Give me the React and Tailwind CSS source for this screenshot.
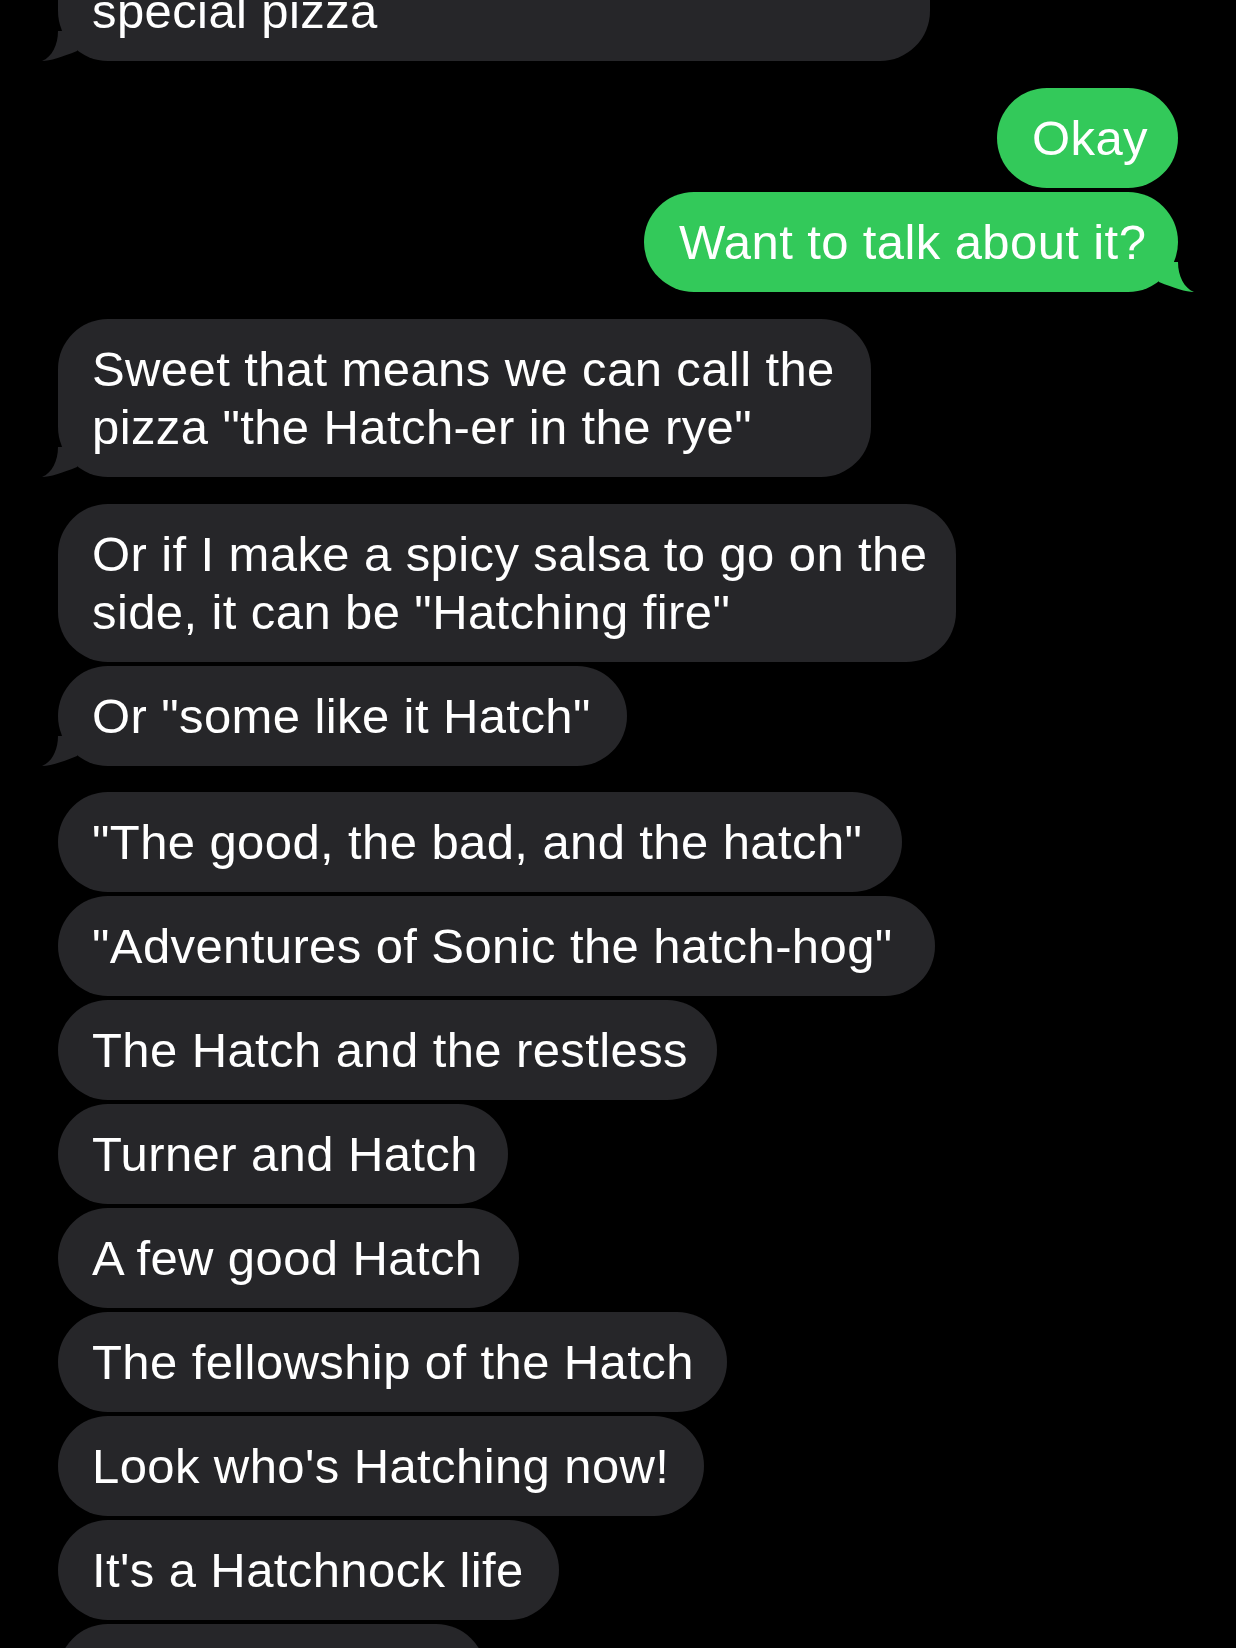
const GRAY = "#262629";
const GREEN = "#33c95a";

const messages = [
  { side: "in", w: 872, lines: ["special pizza"], tail: true, top: true },
  { side: "out", w: 181, lines: ["Okay"], mt: 27 },
  { side: "out", w: 534, lines: ["Want to talk about it?"], mt: 4, tail: true },
  { side: "in", w: 813, lines: ["Sweet that means we can call the", 'pizza "the Hatch-er in the rye"'], mt: 27, tail: true },
  { side: "in", w: 898, lines: ["Or if I make a spicy salsa to go on the", 'side, it can be "Hatching fire"'], mt: 27 },
  { side: "in", w: 569, lines: ['Or "some like it Hatch"'], mt: 4, tail: true },
  { side: "in", w: 844, lines: ['"The good, the bad, and the hatch"'], mt: 26 },
  { side: "in", w: 877, lines: ['"Adventures of Sonic the hatch-hog"'], mt: 4 },
  { side: "in", w: 659, lines: ["The Hatch and the restless"], mt: 4 },
  { side: "in", w: 450, lines: ["Turner and Hatch"], mt: 4 },
  { side: "in", w: 461, lines: ["A few good Hatch"], mt: 4 },
  { side: "in", w: 669, lines: ["The fellowship of the Hatch"], mt: 4 },
  { side: "in", w: 646, lines: ["Look who's Hatching now!"], mt: 4 },
  { side: "in", w: 501, lines: ["It's a Hatchnock life"], mt: 4 },
  { side: "in", w: 428, lines: ["\u00a0"], mt: 4 },
];

// little curled tail under the last bubble of a group
function Tail({ color, right }) {
  return (
    <svg
      viewBox="0 0 40 30"
      className={
        "absolute bottom-0 w-[40px] h-[30px] " +
        (right ? "right-[-16px] -scale-x-100" : "left-[-16px]")
      }
    >
      <path d="M16 0 C16 14 10 26 0 30 C8 30 20 26 35 20 L35 0 Z" fill={color} />
    </svg>
  );
}

function Bubble({ m }) {
  const out = m.side === "out";
  const color = out ? GREEN : GRAY;
  return (
    <div
      className={"flex " + (out ? "justify-end pr-[58px]" : "justify-start pl-[58px]")}
      style={{ marginTop: m.top ? -98 : m.mt }}
    >
      <div
        className={
          "relative rounded-[50px] text-white text-[49px] leading-[58px] tracking-[0.4px] whitespace-nowrap pb-[21px] " +
          (m.top ? "pt-[80px] " : "pt-[21px] ") +
          (out ? "pl-[35px] pr-[28px]" : "pl-[34px] pr-[28px]")
        }
        style={{ width: m.w, backgroundColor: color }}
      >
        {m.tail && <Tail color={color} right={out} />}
        {m.lines.map((l, i) => (
          <div key={i} className="relative">
            {l}
          </div>
        ))}
      </div>
    </div>
  );
}

export default function App() {
  return (
    <div className="w-[1236px] h-[1648px] bg-black overflow-hidden flex flex-col font-['Liberation_Sans',Arial,sans-serif]">
      {messages.map((m, i) => (
        <Bubble key={i} m={m} />
      ))}
    </div>
  );
}
